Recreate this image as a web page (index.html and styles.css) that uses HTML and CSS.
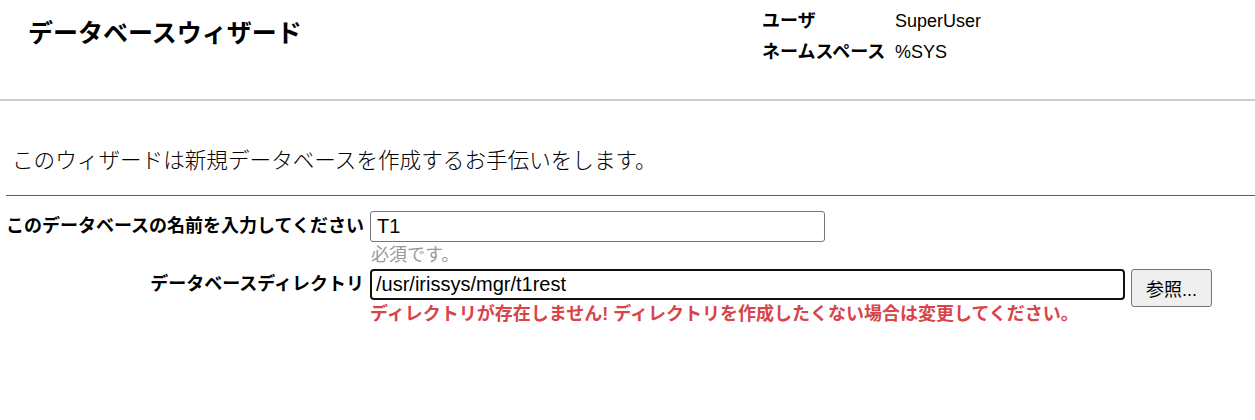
FILE: index.html
```html
<!DOCTYPE html>
<html lang="ja">
<head>
<meta charset="utf-8">
<title>データベースウィザード</title>
<link rel="stylesheet" href="styles.css">
</head>
<body>
<header class="header">
  <h1 class="title">データベースウィザード</h1>
  <table class="info">
    <tr><th>ユーザ</th><td>SuperUser</td></tr>
    <tr><th>ネームスペース</th><td>%SYS</td></tr>
  </table>
</header>
<div class="intro">このウィザードは新規データベースを作成するお手伝いをします。</div>
<div class="rule"></div>
<form class="form">
  <label class="label" for="dbname">このデータベースの名前を入力してください</label>
  <div class="field">
    <input id="dbname" class="input name" type="text" value="T1">
    <div class="hint">必須です。</div>
  </div>
  <label class="label" for="dbdir">データベースディレクトリ</label>
  <div class="field">
    <div class="dirrow">
      <input id="dbdir" class="input dir" type="text" value="/usr/irissys/mgr/t1rest">
      <button type="button" class="browse">参照...</button>
    </div>
    <div class="error">ディレクトリが存在しません! ディレクトリを作成したくない場合は変更してください。</div>
  </div>
</form>
</body>
</html>
```

FILE: styles.css
```css
* { box-sizing: border-box; }
body {
  margin: 0;
  font-family: "Liberation Sans", "Noto Sans CJK JP", sans-serif;
  color: #000;
  background: #fff;
}
.header {
  display: flex;
  height: 99px;
  border-bottom: 2px solid #cccccc;
  box-sizing: content-box;
}
.title {
  margin: 0;
  padding: 16px 0 0 28px;
  width: 762px;
  font-size: 25px;
  font-weight: bold;
  line-height: 34px;
}
.info {
  border-collapse: collapse;
  margin-top: 6px;
  height: 62px;
}
.info th {
  text-align: left;
  font-size: 18px;
  font-weight: bold;
  padding: 0 8px 0 0;
  line-height: 31px;
  vertical-align: middle;
}
.info td {
  font-size: 18px;
  padding: 0;
  line-height: 31px;
  vertical-align: middle;
}
.info tr:first-child th { width: 133px; }
.intro {
  padding: 45px 0 0 12px;
  font-size: 21.6px;
  line-height: 30px;
  height: 94px;
  font-weight: 300;
}
.rule {
  margin-left: 6px;
  border-top: 1px solid #1b7a80;
}
.form {
  display: grid;
  grid-template-columns: 358px auto;
  column-gap: 6px;
  margin: 15px 0 0 6px;
  align-items: start;
}
.label {
  font-size: 18px;
  font-weight: bold;
  text-align: right;
  line-height: 31px;
  white-space: nowrap;
}
.field { display: flex; flex-direction: column; }
.input {
  font-family: "Liberation Sans", "Noto Sans CJK JP", sans-serif;
  font-size: 20px;
  height: 31px;
  padding: 0 6px;
  background: #fff;
  color: #000;
}
.name {
  width: 455px;
  border: 1px solid #767676;
  border-radius: 3px;
}
.hint {
  color: #999;
  font-size: 18px;
  line-height: 26px;
  height: 27px;
  padding-left: 1px;
}
.dirrow { display: flex; align-items: flex-start; gap: 6px; }
.dir {
  width: 755px;
  height: 31px;
  border: 2px solid #101010;
  border-radius: 4px;
  padding: 0 4px;
  outline: none;
}
.browse {
  font-family: "Liberation Sans", "Noto Sans CJK JP", sans-serif;
  font-size: 18px;
  height: 38px;
  width: 81px;
  background: #efefef;
  border: 1px solid #767676;
  border-radius: 3px;
  color: #000;
  padding: 0;
}
.error {
  color: #d9434a;
  font-weight: bold;
  font-size: 18px;
  line-height: 20px;
  margin-top: -3px;
  white-space: nowrap;
}
```
